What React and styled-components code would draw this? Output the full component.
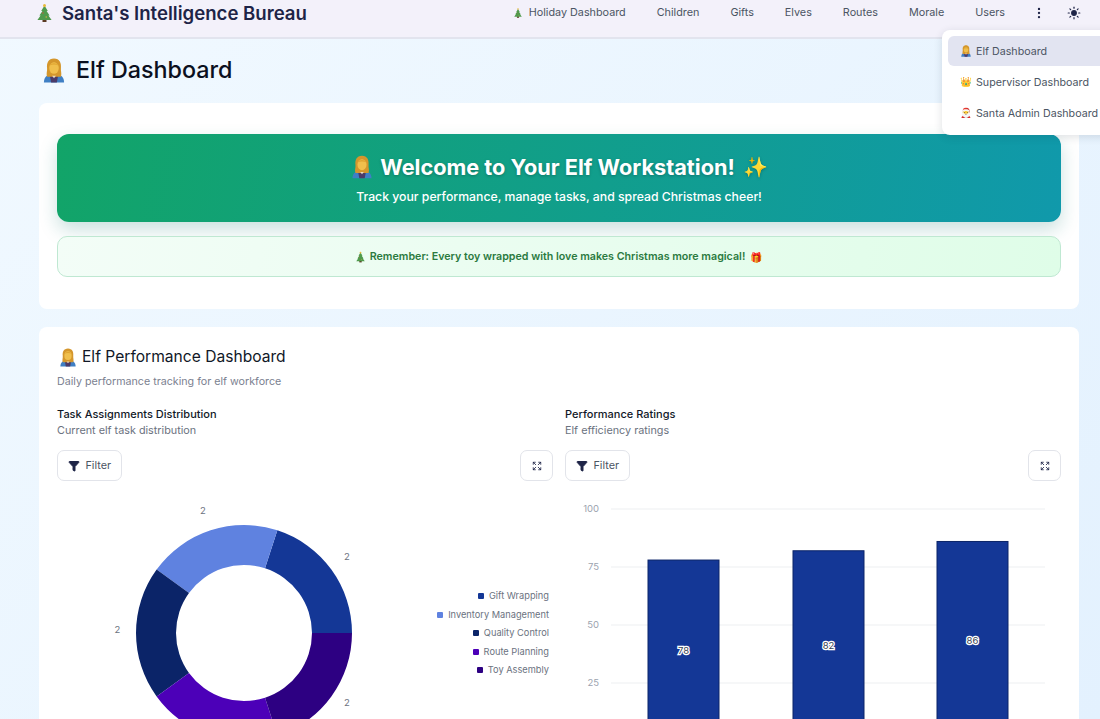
import styled, { createGlobalStyle } from "styled-components";
import { Filter, Expand, EllipsisVertical, Sun } from "lucide-react";

const GlobalStyle = createGlobalStyle`
  html, body {
    margin: 0;
    height: 100%;
    overflow: hidden;
  }
  body {
    font-family: Inter, "Noto Sans", sans-serif;
    color: #0f172a;
  }
`;

const Page = styled.div`
  position: relative;
  width: 1100px;
  height: 719px;
  overflow: hidden;
  background: linear-gradient(135deg, #f1f9ff 0%, #e3f1fe 100%);
`;

const Header = styled.header`
  height: 39px;
  box-sizing: border-box;
  padding: 0 19px 12px 37px;
  background: #f3f1fa;
  border-bottom: 2px solid #e2e4ee;
  display: flex;
  align-items: center;
  justify-content: space-between;
`;

const Brand = styled.div`
  display: flex;
  align-items: center;
  gap: 10px;
  font-size: 18.6px;
  font-weight: 600;
  color: #1e2447;
`;

const Nav = styled.nav`
  display: flex;
  align-items: center;
  gap: 31px;
  font-size: 10.8px;
  color: #4b5563;
`;

const NavItem = styled.span`
  display: flex;
  align-items: center;
  gap: 7px;
`;

const NavIcons = styled.div`
  display: flex;
  align-items: center;
  gap: 21px;
  margin-left: -4px;
`;

const Main = styled.main`
  padding: 0 21px 0 39px;
`;

const PageTitle = styled.h1`
  margin: 16px 0 18px 4px;
  font-size: 23.3px;
  line-height: 30px;
  font-weight: 500;
  color: #0b1020;
  display: flex;
  align-items: center;
  gap: 11px;
`;

const Card = styled.section`
  background: #fff;
  border-radius: 8px;
  padding: ${(p) => p.$padding};
  margin-bottom: 18px;
`;

const Hero = styled.div`
  height: 88px;
  box-sizing: border-box;
  padding-top: 2px;
  border-radius: 12px;
  background: linear-gradient(100deg, #12a468 0%, #1099ab 100%);
  box-shadow: 0 8px 18px rgba(16, 120, 110, 0.22);
  color: #fff;
  display: flex;
  flex-direction: column;
  align-items: center;
  justify-content: center;
  gap: 6px;
`;

const HeroTitle = styled.h2`
  margin: 0 0 0 2px;
  font-size: 21.7px;
  line-height: 30px;
  font-weight: 700;
  text-shadow: 0 1px 3px rgba(0, 0, 0, 0.25);
  display: flex;
  align-items: center;
  gap: 8px;
`;

const HeroText = styled.p`
  margin: 0;
  font-size: 12.25px;
  line-height: 18px;
  font-weight: 500;
`;

const Emoji = styled.span`
  font-size: ${(p) => p.$size}px;
  line-height: 1;
`;

const Notice = styled.div`
  margin-top: 14px;
  height: 41px;
  box-sizing: border-box;
  border: 1px solid #bfe8d2;
  border-radius: 10px;
  background: linear-gradient(100deg, #f3fdf7 0%, #dffde8 100%);
  color: #2b7a3f;
  font-size: 10.7px;
  font-weight: 600;
  display: flex;
  align-items: center;
  justify-content: center;
  gap: 5px;
`;

const SectionTitle = styled.h2`
  margin: 0 0 0 3px;
  font-size: 15.6px;
  line-height: 22px;
  font-weight: 400;
  color: #111827;
  display: flex;
  align-items: center;
  gap: 6px;
`;

const SectionText = styled.p`
  margin: 6px 0 17px;
  font-size: 10.7px;
  line-height: 16px;
  color: #7b8190;
`;

const ChartGrid = styled.div`
  display: grid;
  grid-template-columns: 496px 496px;
  gap: 12px;
`;

const ChartTitle = styled.h3`
  margin: 0;
  font-size: 11px;
  line-height: 15px;
  font-weight: 500;
  color: #111827;
`;

const ChartText = styled.p`
  margin: 1px 0 12px;
  font-size: 10.8px;
  line-height: 15px;
  color: #6b7280;
`;

const Controls = styled.div`
  display: flex;
  justify-content: space-between;
`;

const ControlButton = styled.button`
  height: 31px;
  box-sizing: border-box;
  padding: ${(p) => (p.$square ? "0" : "0 9.5px")};
  width: ${(p) => (p.$square ? "33px" : "auto")};
  background: #fff;
  border: 1px solid #e2e4ea;
  border-radius: 7px;
  display: flex;
  align-items: center;
  justify-content: center;
  gap: 6px;
  font-family: inherit;
  font-size: 10.8px;
  color: #4b5563;
`;

const DonutRow = styled.div`
  display: flex;
  justify-content: space-between;
  align-items: center;
  height: 286px;
  margin-top: 9px;
  padding-right: 4px;
`;

const Legend = styled.ul`
  list-style: none;
  margin: 0;
  padding: 0;
  display: flex;
  flex-direction: column;
  align-items: flex-end;
  gap: 5px;
  font-size: 9.25px;
  line-height: 13.5px;
  color: #6b7280;
`;

const LegendItem = styled.li`
  display: flex;
  align-items: center;
  gap: 5px;
`;

const Swatch = styled.span`
  width: 6px;
  height: 6px;
  border-radius: 1px;
  background: ${(p) => p.$color};
`;

const BarWrap = styled.div`
  margin-top: 19px;
`;

const Menu = styled.div`
  position: absolute;
  top: 30px;
  left: 942px;
  width: 175px;
  height: 105px;
  box-sizing: border-box;
  padding: 6px;
  background: #fff;
  border-radius: 8px;
  box-shadow: 0 2px 8px rgba(30, 41, 59, 0.14);
  font-size: 10.7px;
  color: #4b5563;
  display: flex;
  flex-direction: column;
  gap: 1px;
`;

const MenuItem = styled.div`
  height: 30px;
  flex: none;
  padding: 0 12px;
  border-radius: 6px;
  background: ${(p) => (p.$active ? "#e2e4f1" : "transparent")};
  display: flex;
  align-items: center;
  gap: 5px;
  white-space: nowrap;
`;

const MenuIcon = styled.span`
  width: 11px;
  font-size: 9.5px;
  line-height: 1;
  display: flex;
  justify-content: center;
`;

const slices = [
  { name: "Gift Wrapping", color: "#143796" },
  { name: "Inventory Management", color: "#5f82e0" },
  { name: "Quality Control", color: "#0b2468" },
  { name: "Route Planning", color: "#4c00b8" },
  { name: "Toy Assembly", color: "#2d0082" },
];

const bars = [
  { value: 78, x: 83 },
  { value: 82, x: 228 },
  { value: 86, x: 372 },
];

// ring slice going counter clockwise from 3 o'clock
const slicePath = (cx, cy, r0, r1, from, to) => {
  const pt = (r, a) => {
    const rad = (a * Math.PI) / 180;
    return `${(cx + r * Math.cos(rad)).toFixed(2)} ${(cy - r * Math.sin(rad)).toFixed(2)}`;
  };
  return `M${pt(r1, from)} A${r1} ${r1} 0 0 0 ${pt(r1, to)} L${pt(r0, to)} A${r0} ${r0} 0 0 1 ${pt(r0, from)} Z`;
};

const TreeIcon = ({ width, height }) => (
  <svg width={width} height={height} viewBox="0 0 15 18" role="img" aria-label="tree">
    <rect x="5.5" y="15" width="4" height="3" fill="#5a3a22" />
    <path d="M7.5 1.5 L10.8 7 L9.6 7 L12.6 11.5 L11.4 11.5 L14.6 16 L0.4 16 L3.6 11.5 L2.4 11.5 L5.4 7 L4.2 7 Z" fill="#4f9a4c" />
    <circle cx="7.5" cy="1.6" r="1.5" fill="#e8b93a" />
    <circle cx="6" cy="9" r="0.7" fill="#d9503f" />
    <circle cx="9.2" cy="13" r="0.7" fill="#e8b93a" />
  </svg>
);

const ElfIcon = ({ width, height }) => (
  <svg width={width} height={height} viewBox="0 0 22 26" role="img" aria-label="elf">
    <path d="M0.5 25.5 C0.5 19 5 16.5 11 16.5 C17 16.5 21.5 19 21.5 25.5 Z" fill="#3f7fc4" />
    <path d="M6.5 17 L15.5 17 L14 25.5 L8 25.5 Z" fill="#4b3a68" />
    <path d="M11 0.5 C5 0.5 3.2 5.5 3.8 10.5 C4.2 14 2.6 16 3.8 19.5 L18.2 19.5 C19.4 16 17.8 14 18.2 10.5 C18.8 5.5 17 0.5 11 0.5 Z" fill="#d4962c" />
    <ellipse cx="11" cy="10.5" rx="5" ry="6" fill="#f0bf4c" />
    <path d="M6 8 C7 4.5 15 4.5 16 8 C13 6.5 9 6.5 6 8 Z" fill="#e0a531" />
    <path d="M9 18.5 L11 21 L13 18.5 Z" fill="#e9d9c0" />
  </svg>
);

const DonutChart = () => (
  <svg width="320" height="286" viewBox="0 0 320 286">
    {slices.map((s, i) => (
      <path key={s.name} d={slicePath(187, 143, 68, 108, i * 72, (i + 1) * 72)} fill={s.color} />
    ))}
    <g fontSize="9.5" fill="#6b7280" textAnchor="middle">
      <text x="146" y="24">2</text>
      <text x="290" y="70">2</text>
      <text x="60.5" y="143">2</text>
      <text x="290" y="216">2</text>
    </g>
  </svg>
);

const BarChart = () => (
  <svg width="496" height="240" viewBox="0 0 496 240">
    {[100, 75, 50, 25].map((v, i) => (
      <g key={v}>
        <line x1="46" x2="480" y1={9 + i * 58} y2={9 + i * 58} stroke="#f3f4f6" strokeWidth="1.5" />
        <text x="34" y={12 + i * 58} fontSize="9.5" fill="#9ca3af" textAnchor="end">{v}</text>
      </g>
    ))}
    {bars.map((b) => {
      const top = 241 - b.value * 2.32;
      return (
        <g key={b.value}>
          <rect x={b.x} y={top} width="71" height={240 - top} fill="#143796" stroke="#0b2468" />
          <text
            x={b.x + 35.5}
            y={top + (241 - top) / 2 + 3}
            fontSize="9.5"
            textAnchor="middle"
            fill="#374151"
            stroke="#fff"
            strokeWidth="2.5"
            paintOrder="stroke"
          >
            {b.value}
          </text>
        </g>
      );
    })}
  </svg>
);

const ChartControls = () => (
  <Controls>
    <ControlButton><Filter size={12} fill="#1e2447" color="#1e2447" /> Filter</ControlButton>
    <ControlButton $square><Expand size={10} color="#1e2447" /></ControlButton>
  </Controls>
);

export default function App() {
  return (
    <Page>
      <GlobalStyle />
      <Header>
        <Brand>
          <TreeIcon width={15} height={18} />
          <span>Santa's Intelligence Bureau</span>
        </Brand>
        <Nav>
          <NavItem><TreeIcon width={8} height={10} /> Holiday Dashboard</NavItem>
          <NavItem>Children</NavItem>
          <NavItem>Gifts</NavItem>
          <NavItem>Elves</NavItem>
          <NavItem>Routes</NavItem>
          <NavItem>Morale</NavItem>
          <NavItem>Users</NavItem>
          <NavIcons>
            <EllipsisVertical size={14} color="#1e2447" />
            <Sun size={14} color="#1e2447" fill="#1e2447" />
          </NavIcons>
        </Nav>
      </Header>
      <Main>
        <PageTitle>
          <ElfIcon width={22} height={25} />
          <span>Elf Dashboard</span>
        </PageTitle>
        <Card $padding="31px 18px 32px">
          <Hero>
            <HeroTitle>
              <ElfIcon width={20} height={24} />
              <span>Welcome to Your Elf Workstation!</span>
              <Emoji $size={20}>✨</Emoji>
            </HeroTitle>
            <HeroText>Track your performance, manage tasks, and spread Christmas cheer!</HeroText>
          </Hero>
          <Notice>
            <TreeIcon width={9} height={12} />
            <span>Remember: Every toy wrapped with love makes Christmas more magical!</span>
            <Emoji $size={10}>🎁</Emoji>
          </Notice>
        </Card>
        <Card $padding="19px 18px">
          <SectionTitle>
            <ElfIcon width={16} height={19} />
            <span>Elf Performance Dashboard</span>
          </SectionTitle>
          <SectionText>Daily performance tracking for elf workforce</SectionText>
          <ChartGrid>
            <div>
              <ChartTitle>Task Assignments Distribution</ChartTitle>
              <ChartText>Current elf task distribution</ChartText>
              <ChartControls />
              <DonutRow>
                <DonutChart />
                <Legend>
                  {slices.map((s) => (
                    <LegendItem key={s.name}><Swatch $color={s.color} />{s.name}</LegendItem>
                  ))}
                </Legend>
              </DonutRow>
            </div>
            <div>
              <ChartTitle>Performance Ratings</ChartTitle>
              <ChartText>Elf efficiency ratings</ChartText>
              <ChartControls />
              <BarWrap><BarChart /></BarWrap>
            </div>
          </ChartGrid>
        </Card>
      </Main>
      <Menu>
        <MenuItem $active><MenuIcon><ElfIcon width={10} height={12} /></MenuIcon> Elf Dashboard</MenuItem>
        <MenuItem><MenuIcon>👑</MenuIcon> Supervisor Dashboard</MenuItem>
        <MenuItem><MenuIcon>🎅</MenuIcon> Santa Admin Dashboard</MenuItem>
      </Menu>
    </Page>
  );
}
